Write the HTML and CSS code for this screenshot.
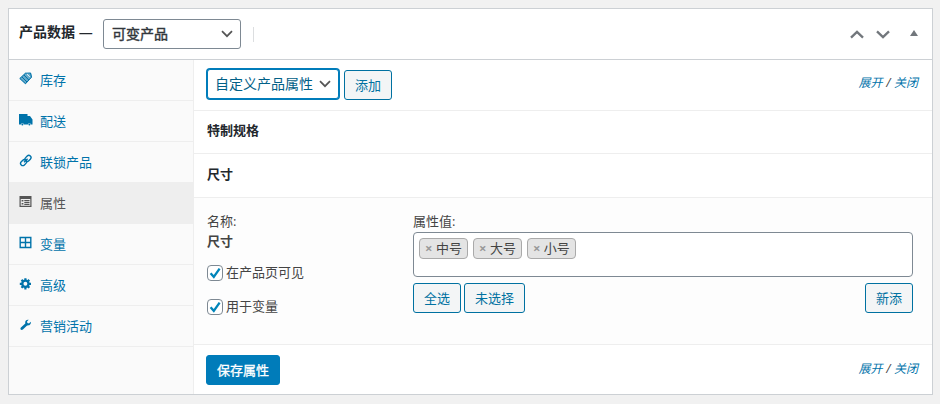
FILE: index.html
```html
<!DOCTYPE html>
<html lang="zh-CN">
<head>
  <meta charset="UTF-8">
  <meta name="viewport" content="width=device-width, initial-scale=1.0">
  <title>产品数据</title>
  <link rel="stylesheet" href="styles.css">
</head>
<body>

<div class="postbox">
  <div class="postbox-header">
    <h2>产品数据 —</h2>
    <span class="select type-select">
      <select>
        <option>可变产品</option>
      </select>
      <svg width="12" height="8" viewBox="0 0 12 8"><path d="M1 1.2l5 5 5-5"/></svg>
    </span>
    <span class="divider"></span>
    <div class="handle-actions">
      <svg class="arrow" width="14" height="9" viewBox="0 0 14 9"><path d="M1 7.7l6-5.8 6 5.8"/></svg>
      <svg class="arrow" width="14" height="9" viewBox="0 0 14 9"><path d="M1 1.3l6 5.8 6-5.8"/></svg>
      <svg class="toggle" width="8" height="6" viewBox="0 0 8 6"><path d="M0 6l4-6 4 6z"/></svg>
    </div>
  </div>

  <div class="panel-wrap">
    <ul class="tabs">
      <li>
        <svg viewBox="0 0 14 14"><path d="M.5 6.500L6.500.8 8 1.500 12 .8 13 5 6.500 12.200z" opacity=".6"/><path d="M.8 6.500L6.500 1.200 11.500 1l1 4.200-6 6.500zM3 5l5 5M5 3l4.800 5" fill="none" stroke="currentColor"/><path d="M8 2.200l2.800 2.600" stroke="#fafafa" stroke-width=".9"/></svg>
        <a>库存</a>
      </li>
      <li>
        <svg viewBox="0 0 14 14"><path d="M0 1h8.500v2H11l2.500 3.500v5H12a1.700 1.700 0 0 0-3.200 0H5a1.700 1.700 0 0 0-3.200 0H0z"/><circle cx="3.400" cy="11.600" r="1"/><circle cx="10.400" cy="11.600" r="1"/></svg>
        <a>配送</a>
      </li>
      <li>
        <svg viewBox="0 0 14 14" class="line"><rect x="5.700" y="2.200" width="6.600" height="4.400" rx="2.200" transform="rotate(-45 9 4.400)"/><rect x="1.300" y="6.400" width="6.600" height="4.400" rx="2.200" transform="rotate(-45 4.600 8.600)"/><path d="M5 8.300l3.600-3.600"/></svg>
        <a>联锁产品</a>
      </li>
      <li class="active">
        <svg viewBox="0 0 14 14"><path fill-rule="evenodd" d="M.5 1h12v11H.5zM1.700 4v6.800h9.600V4z"/><path d="M2.600 5h1.800v1.600H2.600zM5.300 5h5.200v1.300H5.300zM5.300 7h5.200v1.200H5.300zM2.600 8h1.800v1.500H2.600zM5.300 9h5.200v1.100H5.300z"/></svg>
        <a>属性</a>
      </li>
      <li>
        <svg viewBox="0 0 14 14" class="line"><path d="M1.200 1.500h10.600v10H1.200zM6.500 1.500v10M1.200 6.500h10.600"/></svg>
        <a>变量</a>
      </li>
      <li>
        <svg viewBox="0 0 14 14"><circle cx="6.400" cy="6.800" r="3.100" fill="none" stroke="currentColor" stroke-width="2.300"/><path d="M6.400 1.200v2.500M6.400 9.900v2.500M.8 6.800h2.500M9.500 6.800H12M2.500 2.900l1.600 1.600M8.700 9.100l1.600 1.600M10.300 2.900L8.700 4.500M4.100 9.100l-1.600 1.600" stroke="currentColor" stroke-width="2.200"/></svg>
        <a>高级</a>
      </li>
      <li>
        <svg viewBox="0 0 14 14"><path d="M11.700 3.800L10 5.400 8.400 4.900 8 3.400 9.700 1.800C8 1.200 6 2.600 6.200 4.700L6.300 5.500 1.900 9.500c-1.400 1.500.5 3.300 2 2L8.100 7.400c2.300.6 4.400-1.500 3.600-3.600z"/></svg>
        <a>营销活动</a>
      </li>
    </ul>

    <div class="panel">
      <div class="toolbar toolbar-top">
        <span class="select attribute-select">
          <select>
            <option>自定义产品属性</option>
          </select>
          <svg width="12" height="8" viewBox="0 0 12 8"><path d="M1 1.2l5 5 5-5"/></svg>
        </span>
        <button class="button">添加</button>
        <span class="expand-close"><a>展开</a> / <a>关闭</a></span>
      </div>

      <h3 class="first">特制规格</h3>
      <h3>尺寸</h3>

      <div class="attribute-data">
        <div class="attribute-name">
          <label>名称:</label>
          <strong>尺寸</strong>
          <label class="check">
            <span class="box"><svg viewBox="0 0 14 14"><path d="M2.600 7.300L5.800 10.800 11.600 2.600"/></svg></span>
            <span>在产品页可见</span>
          </label>
          <label class="check">
            <span class="box"><svg viewBox="0 0 14 14"><path d="M2.600 7.300L5.800 10.800 11.600 2.600"/></svg></span>
            <span>用于变量</span>
          </label>
        </div>
        <div class="attribute-values">
          <label>属性值:</label>
          <ul class="choices">
            <li><b>×</b>中号</li>
            <li><b>×</b>大号</li>
            <li><b>×</b>小号</li>
          </ul>
          <div class="value-buttons">
            <button class="button">全选</button>
            <button class="button">未选择</button>
            <button class="button add-new">新添</button>
          </div>
        </div>
      </div>

      <div class="toolbar toolbar-bottom">
        <button class="button primary">保存属性</button>
        <span class="expand-close"><a>展开</a> / <a>关闭</a></span>
      </div>
    </div>
  </div>
</div>

</body>
</html>
```
FILE: styles.css
```css
* {
  box-sizing: border-box;
}
body {
  margin: 0;
  padding: 8px 7px 9px 8px;
  background: #f1f1f1;
  color: #444;
  font-family: "Open Sans", "Noto Sans CJK SC", sans-serif;
  font-size: 13px;
  line-height: 20px;
}
h2, h3, ul {
  margin: 0;
  padding: 0;
}
li {
  list-style: none;
}
svg {
  display: block;
}
a {
  color: #0073aa;
}
select, button {
  font-family: inherit;
  margin: 0;
}

.postbox {
  height: 387px;
  border: 1px solid #ccd0d4;
  background: #fff;
}
.postbox-header {
  display: flex;
  align-items: center;
  height: 51px;
  padding: 0 14px 0 10px;
  border-bottom: 1px solid #ccd0d4;
}
.postbox-header h2 {
  width: 84px;
  padding-bottom: 4px;
  color: #23282d;
  font-size: 14px;
  font-weight: 600;
  line-height: 20px;
  white-space: nowrap;
}
.divider {
  width: 1px;
  height: 15px;
  margin-left: 12px;
  background: #dcdee0;
}
.handle-actions {
  display: flex;
  align-items: center;
  gap: 12px;
  margin-left: auto;
  color: #72777c;
}
.arrow {
  fill: none;
  stroke: currentColor;
  stroke-width: 2.3;
}
.toggle {
  margin-left: 8px;
  margin-top: -2px;
  fill: currentColor;
}

/* Selects */
.select {
  position: relative;
  flex: none;
}
.select select {
  display: block;
  width: 100%;
  height: 30px;
  padding: 0 24px 0 8px;
  border: 1px solid #7e8993;
  border-radius: 3px;
  background: #fff;
  color: #32373c;
  font-size: 14px;
  line-height: 28px;
  appearance: none;
}
.select svg {
  position: absolute;
  top: 11px;
  right: 8px;
  fill: none;
  stroke: #555;
  stroke-width: 1.7;
}
.type-select {
  width: 138px;
}
.type-select select {
  -webkit-text-stroke: 0.4px #32373c;
}
.attribute-select {
  width: 132px;
}
.attribute-select select {
  padding-left: 7px;
  border-color: #007cba;
  box-shadow: 0 0 0 1px #007cba;
  color: #016087;
}

/* Tabs */
.panel-wrap {
  display: flex;
  height: 334px;
}
.tabs {
  width: 185px;
  flex: none;
  border-right: 1px solid #eee;
  background: #fafafa;
}
.tabs li {
  display: flex;
  height: 41px;
  padding: 12px 10px 0;
  gap: 8px;
  border-bottom: 1px solid #eee;
  color: #0073aa;
}
.tabs li svg {
  width: 14px;
  height: 14px;
  margin-right: -1px;
  fill: currentColor;
}
.tabs li svg.line {
  fill: none;
  stroke: currentColor;
  stroke-width: 1.4;
}
.tabs a {
  line-height: 16px;
}
.tabs .active {
  background: #eee;
}
.tabs .active, .tabs .active a {
  color: #555;
}

/* Attributes panel */
.panel {
  flex: 1;
}
.toolbar {
  display: flex;
  padding: 0 14px 0 12px;
}
.toolbar-top {
  height: 51px;
  padding-top: 9px;
  padding-left: 13px;
  border-bottom: 1px solid #eee;
}
.toolbar-top .button {
  margin: 1px 0 0 5px;
}
.toolbar-bottom {
  padding-top: 10px;
}
.expand-close {
  margin-left: auto;
  font-size: 12px;
  font-style: italic;
  line-height: 28px;
  word-spacing: 0.5px;
}
.button {
  height: 30px;
  padding: 0 10px;
  border: 1px solid #0071a1;
  border-radius: 3px;
  background: #f3f5f6;
  color: #0071a1;
  font-size: 13px;
  line-height: 28px;
  white-space: nowrap;
}
.primary {
  border-color: #007cba;
  background: #007cba;
  color: #fff;
  -webkit-text-stroke: 0.3px #fff;
}
.panel h3 {
  height: 44px;
  padding-left: 13px;
  border-bottom: 1px solid #eee;
  color: #23282d;
  font-size: 13px;
  font-weight: 600;
  line-height: 40px;
}
.panel h3.first {
  height: 43px;
  line-height: 38px;
}
.attribute-data {
  display: flex;
  height: 147px;
  padding: 13px 19px 0 13px;
  border-bottom: 1px solid #eee;
  background: #fdfdfd;
}
.attribute-name {
  width: 206px;
}
.attribute-name label, .attribute-name strong {
  display: block;
}
.attribute-name strong {
  font-weight: 600;
}
.attribute-name .check {
  display: flex;
  align-items: flex-end;
  gap: 3px;
  height: 20px;
  margin-top: 11px;
}
.check + .check {
  margin-top: 14px;
}
.check span {
  line-height: 20px;
}
.attribute-name .box {
  width: 16px;
  height: 16px;
  margin-bottom: 1px;
  border: 1px solid #7e8993;
  border-radius: 4px;
  background: #fff;
}
.box path {
  fill: none;
  stroke: #0085ba;
  stroke-width: 2.3;
}
.attribute-values {
  flex: 1;
}
.attribute-values > label {
  display: block;
  height: 21px;
}
.choices {
  display: flex;
  gap: 5px;
  height: 45px;
  padding: 5px;
  border: 1px solid #7e8993;
  border-radius: 4px;
  background: #fff;
}
.choices li {
  height: 21px;
  padding: 0 5px;
  border: 1px solid #aaa;
  border-radius: 4px;
  background: #e4e4e4;
  line-height: 19px;
}
.choices b {
  margin-right: 3.5px;
  color: #999;
}
.value-buttons {
  display: flex;
  gap: 3px;
  margin-top: 6px;
}
.add-new {
  margin-left: auto;
}
```
